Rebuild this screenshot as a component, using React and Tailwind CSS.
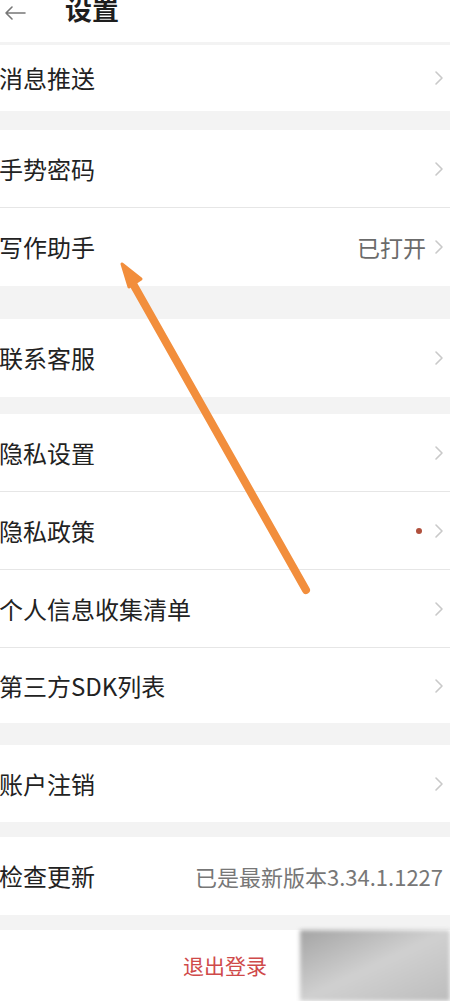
import React from 'react';

const font = { fontFamily: '"Noto Sans CJK SC", "Noto Sans", sans-serif' };

const Chevron = () => (
  <svg width="10" height="16" viewBox="0 0 10 16" className="shrink-0">
    <path d="M2 2 L8 8 L2 14" fill="none" stroke="#c9c9c9" strokeWidth="1.6" strokeLinecap="round" strokeLinejoin="round" />
  </svg>
);

const Row = ({ label, right, dot, h = 'h-[78px]', chevron = true, divider = false }) => (
  <div className={`flex items-center bg-white ${h} ${divider ? 'border-b border-[#e6e6e6]' : ''}`}>
    <span className="-ml-[1px] text-[24px] leading-none text-[#222] whitespace-nowrap">{label}</span>
    <div className="ml-auto flex items-center gap-[8px] pr-[6px]">
      {dot && <span className="mr-[4px] h-[6px] w-[6px] rounded-full bg-[#b0503c]" />}
      {right && <span className="text-[23px] leading-none text-[#6b6b6b]">{right}</span>}
      {chevron && <Chevron />}
    </div>
  </div>
);

const Gap = ({ h }) => <div className={`${h} bg-[#f3f3f3]`} />;

export default function App() {
  return (
    <div className="relative w-[450px] h-[1001px] overflow-hidden bg-[#f3f3f3]" style={font}>
      {/* header */}
      <div className="flex h-[42px] items-start bg-white">
        <div className="flex h-[26px] items-center pl-[3px]">
          <svg width="24" height="16" viewBox="0 0 24 16">
            <path d="M22 8 H3 M9 2 L3 8 L9 14" fill="none" stroke="#777" strokeWidth="1.6" strokeLinecap="round" strokeLinejoin="round" />
          </svg>
        </div>
        <span className="ml-[38px] -mt-[5px] text-[27px] font-bold leading-none text-[#1e1e1e]">设置</span>
      </div>
      <Gap h="h-[3px]" />
      <Row label="消息推送" h="h-[66px]" />
      <Gap h="h-[19px]" />
      <Row label="手势密码" divider />
      <Row label="写作助手" right="已打开" />
      <Gap h="h-[33px]" />
      <Row label="联系客服" />
      <Gap h="h-[17px]" />
      <Row label="隐私设置" divider />
      <Row label="隐私政策" dot divider />
      <Row label="个人信息收集清单" divider />
      <Row label="第三方SDK列表" h="h-[75px]" />
      <Gap h="h-[22px]" />
      <Row label="账户注销" h="h-[77px]" />
      <Gap h="h-[15px]" />
      <div className="flex h-[78px] items-center bg-white overflow-hidden">
        <span className="-ml-[1px] w-[196px] shrink-0 text-[24px] leading-none text-[#222] whitespace-nowrap">检查更新</span>
        <span className="text-[22px] leading-none text-[#777] whitespace-nowrap">已是最新版本3.34.1.1227</span>
      </div>
      <Gap h="h-[15px]" />
      <div className="flex h-[71px] items-center justify-center bg-white">
        <span className="text-[21px] leading-none text-[#cf4a4a]">退出登录</span>
      </div>

      {/* annotation arrow */}
      <svg className="absolute left-0 top-0 pointer-events-none" width="450" height="1001">
        <line x1="306" y1="590" x2="132" y2="282" stroke="#f28e3c" strokeWidth="8" strokeLinecap="round" />
        <path d="M122 264 L141 279 L129 287 Z" fill="#f28e3c" stroke="#f28e3c" strokeWidth="3" strokeLinejoin="round" />
      </svg>

      {/* blurred watermark */}
      <div className="absolute left-[300px] top-[930px] h-[71px] w-[150px] bg-gradient-to-br from-[#a4a4a4] via-[#d0d0d0] to-[#bdbdbd] blur-[2px]" />
    </div>
  );
}
